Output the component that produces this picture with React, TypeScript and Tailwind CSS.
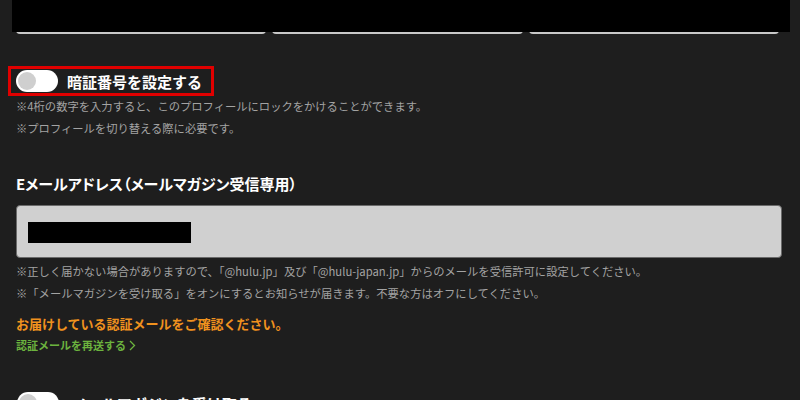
import React from "react";

function Toggle() {
  return (
    <span className="inline-flex h-[22px] w-[42px] shrink-0 items-center rounded-full bg-white px-[2px]">
      <span className="h-[18px] w-[18px] rounded-full bg-[#cfcfcf]" />
    </span>
  );
}

export default function App() {
  return (
    <div
      className="relative h-[400px] w-[800px] overflow-hidden bg-[#1e1e1e] text-white"
      style={{ fontFamily: '"Noto Sans CJK JP", "Noto Sans", sans-serif' }}
    >
      {/* profile cards (covered) */}
      <div className="relative h-[34px]">
        <div className="flex h-[34px] gap-[6px] pl-4 pr-[21px]">
          {[0, 1, 2].map((i) => (
            <div key={i} className="flex-1 rounded-b-[4px] border-b-2 border-[#c8c8c8] bg-[#2a2a2a]" />
          ))}
        </div>
        <div className="absolute left-[12px] top-0 h-[32px] w-[778px] bg-black" />
      </div>

      {/* passcode toggle */}
      <div className="mt-[32px] pl-2">
        <div className="inline-flex h-[30px] w-[206px] items-center gap-[9px] border-[3px] border-[#e00000] pl-[5px]">
          <Toggle />
          <span className="text-[15px] font-bold leading-none">暗証番号を設定する</span>
        </div>
      </div>
      <div className="-mt-[1px] pl-4 text-[11.3px] leading-[22px] text-[#a3a3a3]">
        <p>※4桁の数字を入力すると、このプロフィールにロックをかけることができます。</p>
        <p>※プロフィールを切り替える際に必要です。</p>
      </div>

      {/* email */}
      <div className="px-4">
        <h2 className="mt-[35px] text-[15px] font-bold leading-[20px] [font-feature-settings:'palt']">
          Eメールアドレス（メールマガジン受信専用）
        </h2>
        <div className="mt-[11px] h-[53px] w-[766px] rounded-[4px] border border-[#6a6a6a] bg-[#d0d0d0] pl-[11px] pt-[16px]">
          <div className="h-[21px] w-[163px] bg-black" />
        </div>
        <div className="mt-[2px] text-[11.3px] leading-[22px] text-[#a3a3a3]">
          <p>※正しく届かない場合がありますので、「@hulu.jp」及び「@hulu-japan.jp」からのメールを受信許可に設定してください。</p>
          <p>※「メールマガジンを受け取る」をオンにするとお知らせが届きます。不要な方はオフにしてください。</p>
        </div>
        <p className="mt-[10px] text-[13px] font-bold leading-[20px] text-[#f0921e]">お届けしている認証メールをご確認ください。</p>
        <p className="mt-[1px] flex items-center gap-[3px] text-[11px] font-bold leading-[20px] text-[#6cb33e]">
          認証メールを再送する
          <svg width="7" height="11" viewBox="0 0 7 11" fill="none" stroke="currentColor" strokeWidth="1.3">
            <path d="M1 1l4.5 4.5L1 10" />
          </svg>
        </p>
      </div>

      {/* newsletter toggle */}
      <div className="mt-[37px] flex items-center gap-[13px] pl-[17px]">
        <Toggle />
        <span className="text-[15px] font-bold leading-none">メールマガジンを受け取る</span>
      </div>
    </div>
  );
}
